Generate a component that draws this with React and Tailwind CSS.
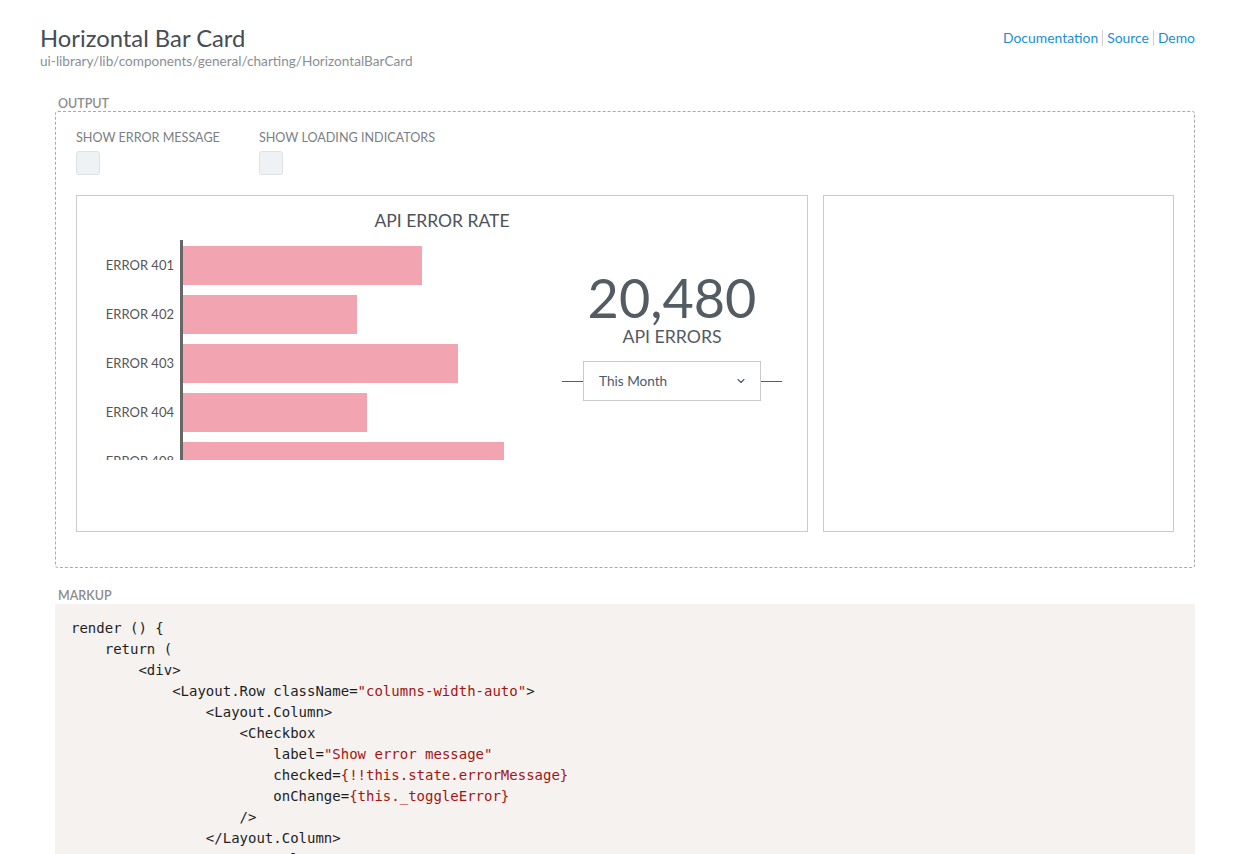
import React from 'react';
import { ChevronDown } from 'lucide-react';

const BARS = [
  { label: 'ERROR 401', width: 239 },
  { label: 'ERROR 402', width: 174 },
  { label: 'ERROR 403', width: 275 },
  { label: 'ERROR 404', width: 184 },
  { label: 'ERROR 408', width: 321 },
];

const S = ({ children }) => <span className="text-[#a31515]">{children}</span>;

function Code() {
  return (
    <pre className="whitespace-pre font-['DejaVu_Sans_Mono',monospace] text-[14px] leading-[21px] text-[#1e1e1e]">
{`render () {
    return (
        <div>
            <Layout.Row className=`}<S>"columns-width-auto"</S>{`>
                <Layout.Column>
                    <Checkbox
                        label=`}<S>"Show error message"</S>{`
                        checked=`}<S>{'{!!this.state.errorMessage}'}</S>{`
                        onChange=`}<S>{'{this._toggleError}'}</S>{`
                    />
                </Layout.Column>
                <Layout.Column>
                    <Checkbox
                        label=`}<S>"Show loading indicators"</S>{`
                        checked=`}<S>{'{!!this.state.loading}'}</S>{`
                        onChange=`}<S>{'{this._toggleLoading}'}</S>{`
                    />
                </Layout.Column>
            </Layout.Row>
        </div>
    );
}`}
    </pre>
  );
}

function Checkbox({ label }) {
  return (
    <div className="flex flex-col pt-[1px]">
      <span className="text-[12.6px] leading-[16px] uppercase text-[#7b7f83]">{label}</span>
      <div className="mt-[5px] w-[24px] h-[24px] rounded-[3px] bg-[#eef2f5] border border-[#dde2e6]" />
    </div>
  );
}

export default function App() {
  return (
    <div className="min-h-screen bg-white font-['Lato','Open_Sans',sans-serif] px-[40px] pt-[24px]">
      {/* header */}
      <div className="flex items-start justify-between">
        <div>
          <h1 className="text-[23.8px] leading-[28px] text-[#474d53]">Horizontal Bar Card</h1>
          <p className="text-[13.6px] leading-[18px] text-[#8a8f94]">ui-library/lib/components/general/charting/HorizontalBarCard</p>
        </div>
        <div className="flex items-center text-[13.9px] leading-[16px] text-[#1b8fd0] mt-[6px]">
          <a className="pr-[4px]">Documentation</a>
          <a className="px-[4px] border-l border-[#cfcfcf]">Source</a>
          <a className="pl-[4px] border-l border-[#cfcfcf]">Demo</a>
        </div>
      </div>

      <div className="ml-[15px]">
        {/* output */}
        <div className="mt-[27px] pl-[3px] text-[12.5px] leading-[14px] font-semibold uppercase text-[#8c8c8c]">Output</div>
        <div className="border border-dashed border-[#a9a9a9] rounded-[3px] px-[20px] pt-[17px] pb-[35px]">
          <div className="flex gap-[39px]">
            <Checkbox label="Show error message" />
            <Checkbox label="Show loading indicators" />
          </div>

          <div className="flex gap-[15px] mt-[20px]">
            {/* bar card */}
            <div className="w-[732px] h-[337px] border border-[#c9cbcd] bg-white">
              <div className="pt-[15px] text-center text-[17.5px] leading-[20px] uppercase text-[#4d5359]">API Error Rate</div>
              <div className="flex mt-[9px]">
                <div className="w-[485px] h-[220px] overflow-hidden flex">
                  <div className="w-[103px] flex flex-col gap-[10px] pt-[6px] pr-[6px]">
                    {BARS.map((b) => (
                      <div key={b.label} className="h-[39px] shrink-0 flex items-center justify-end text-[13px] text-[#555] whitespace-nowrap">
                        {b.label}
                      </div>
                    ))}
                  </div>
                  <div className="w-[3px] h-full bg-[#666]" />
                  <div className="flex-1 flex flex-col gap-[10px] pt-[6px]">
                    {BARS.map((b) => (
                      <div key={b.label} className="h-[39px] shrink-0 bg-[#f2a5b1]" style={{ width: b.width }} />
                    ))}
                  </div>
                </div>
                <div className="w-[220px] flex flex-col items-center pt-[31px]">
                  <div className="text-[54px] leading-[54px] text-[#535b63]">20,480</div>
                  <div className="mt-[2px] text-[17.7px] leading-[20px] uppercase text-[#535b63]">API Errors</div>
                  <div className="mt-[14px] w-full flex items-center">
                    <div className="w-[21px] h-px bg-[#555d66]" />
                    <div className="flex-1 h-[40px] border border-[#c9cbcd] flex items-center justify-between pl-[15px] pr-[13px] text-[13.6px] text-[#4a5a6e]">
                      <span>This Month</span>
                      <ChevronDown className="w-[12px] h-[12px] text-[#4a5a6e]" strokeWidth={2.2} />
                    </div>
                    <div className="w-[21px] h-px bg-[#555d66]" />
                  </div>
                </div>
              </div>
            </div>
            {/* empty card */}
            <div className="flex-1 h-[337px] border border-[#c9cbcd] bg-white" />
          </div>
        </div>

        {/* markup */}
        <div className="mt-[21px] mb-[1px] pl-[3px] text-[12.5px] leading-[14px] font-semibold uppercase text-[#8c8c8c]">Markup</div>
        <div className="bg-[#f5f2ef] px-[16px] pt-[14px] pb-[20px]">
          <Code />
        </div>
      </div>
    </div>
  );
}
